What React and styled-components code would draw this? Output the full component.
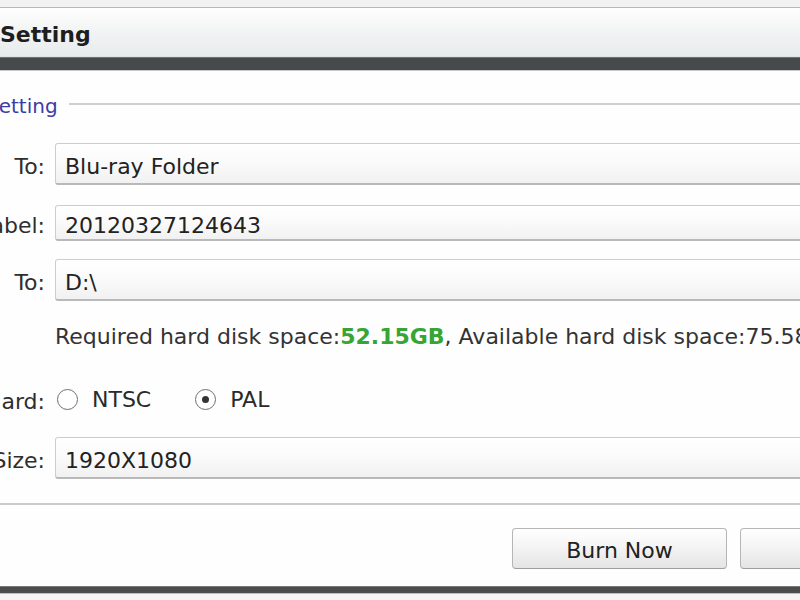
import React from 'react';
import styled, { createGlobalStyle } from 'styled-components';

const Global = createGlobalStyle`
	html, body {
		margin: 0;
		padding: 0;
		background: #fdfdfd;
	}
	body {
		font-family: "DejaVu Sans", Verdana, sans-serif;
		color: #2b2b2b;
	}
`;

const Page = styled.div`
	width: 800px;
	height: 600px;
	overflow: hidden;
	position: relative;
`;

// the dialog is wider than the shot, its left part is cut away
const Frame = styled.div`
	margin-left: -160px;
	width: 1120px;
`;

const TopStrip = styled.div`
	height: 7px;
	background: #f2f2f2;
	border-bottom: 1px solid #b8b8b8;
`;

const TitleBar = styled.div`
	height: 48px;
	line-height: 53px;
	padding-left: 160px;
	font-size: 22px;
	font-weight: bold;
	color: #1e1e1e;
	background: linear-gradient(#ffffff, #f4f5f5 40%, #e8ebec);
	border-bottom: 1px solid #dfe4e5;
`;

const DarkBar = styled.div`
	height: 12px;
	background: #464a4b;
	border-top: 1px solid #6d7273;
	border-bottom: 1px solid #c9c9c9;
`;

const Body = styled.div`
	background: #fefefe;
	padding-top: 23px;
`;

const Legend = styled.div`
	display: flex;
	align-items: center;
	gap: 11px;
	padding-left: 146px;
	height: 24px;
	font-size: 20px;
	color: #3c3ca6;

	&::after {
		content: '';
		flex: 1;
		margin-top: -5px;
		border-top: 2px solid #cfcfcf;
	}
`;

const Row = styled.div`
	display: grid;
	grid-template-columns: 205px 1fr;
	column-gap: 10px;
	align-items: center;
	margin-top: ${p => p.$mt}px;
	height: ${p => p.$h}px;
`;

const Label = styled.div`
	text-align: right;
	font-size: 22px;
	word-spacing: 8px;
	color: #2e2e2e;
	white-space: nowrap;
	padding-top: 5px;
`;

const Field = styled.div`
	height: ${p => p.$h}px;
	box-sizing: border-box;
	border: 1px solid #cdcdcd;
	border-bottom: 2px solid #b9b9b9;
	border-radius: 3px;
	background: linear-gradient(#ffffff, #fafafa 50%, #f1f1f1);
	padding: 5px 0 0 9px;
	display: flex;
	align-items: center;
	font-size: 22px;
	color: #222;
`;

const Info = styled.div`
	font-size: 22px;
	color: #333;
	white-space: nowrap;

	b {
		color: #35a535;
		font-weight: 600;
	}
`;

const RadioGroup = styled.div`
	display: flex;
	align-items: center;
	font-size: 22px;
	color: #2a2a2a;
	padding-left: 2px;
`;

const RadioItem = styled.label`
	display: flex;
	align-items: center;
	gap: 14px;
	margin-right: 44px;
`;

const Circle = styled.span`
	width: 19px;
	height: 19px;
	border: 1.5px solid #6f6f6f;
	border-radius: 50%;
	background: #fff;
	display: flex;
	align-items: center;
	justify-content: center;

	&::after {
		content: '';
		width: 7px;
		height: 7px;
		border-radius: 50%;
		background: ${p => (p.$on ? '#333' : 'transparent')};
	}
`;

const Separator = styled.div`
	margin-top: 24px;
	border-top: 2px solid #cbcbcb;
`;

const ButtonRow = styled.div`
	display: flex;
	gap: 13px;
	padding-left: 672px;
	margin-top: 23px;
`;

const Button = styled.button`
	width: 215px;
	height: 41px;
	border: 1px solid #b5b5b5;
	border-bottom-color: #9e9e9e;
	border-radius: 4px;
	background: linear-gradient(#ffffff, #f3f3f3 50%, #e4e4e4);
	font-family: "DejaVu Sans", Verdana, sans-serif;
	font-size: 22px;
	color: #222;
	padding: 3px 0 0;
`;

const BottomBar = styled.div`
	margin-top: 17px;
	height: 6px;
	background: #4a4c4d;
	border-top: 1px solid #777;
	border-bottom: 1px solid #bdbdbd;
`;

const Footer = styled.div`
	height: 20px;
	background: #f4f4f4;
`;

function Radio({ on, children }) {
	return (
		<RadioItem>
			<Circle $on={on} />
			<span>{children}</span>
		</RadioItem>
	);
}

export default function App() {
	return (
		<Page>
			<Global />
			<Frame>
				<TopStrip />
				<TitleBar>Setting</TitleBar>
				<DarkBar />
				<Body>
					<Legend>Setting</Legend>
					<Row $mt={25} $h={42}>
						<Label>Burn To:</Label>
						<Field $h={42}>Blu-ray Folder</Field>
					</Row>
					<Row $mt={20} $h={36}>
						<Label>Volume Label:</Label>
						<Field $h={36}>20120327124643</Field>
					</Row>
					<Row $mt={18} $h={42}>
						<Label>Save To:</Label>
						<Field $h={42}>D:\</Field>
					</Row>
					<Row $mt={23} $h={24}>
						<span />
						<Info>
							Required hard disk space:<b>52.15GB</b>, Available hard disk space:75.58GB
						</Info>
					</Row>
					<Row $mt={36} $h={30}>
						<Label>TV Standard:</Label>
						<RadioGroup>
							<Radio>NTSC</Radio>
							<Radio on>PAL</Radio>
						</RadioGroup>
					</Row>
					<Row $mt={23} $h={42}>
						<Label>Video Size:</Label>
						<Field $h={42}>1920X1080</Field>
					</Row>
					<Separator />
					<ButtonRow>
						<Button>Burn Now</Button>
						<Button>Cancel</Button>
					</ButtonRow>
					<BottomBar />
					<Footer />
				</Body>
			</Frame>
		</Page>
	);
}
